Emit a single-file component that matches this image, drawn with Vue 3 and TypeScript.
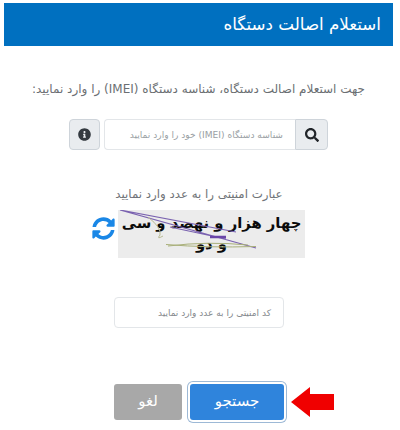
<script setup lang="ts">
const title: string = 'استعلام اصالت دستگاه'
</script>

<template>
  <div class="page" dir="rtl">
    <header class="head">{{ title }}</header>
    <p class="intro">جهت استعلام اصالت دستگاه، شناسه دستگاه (IMEI) را وارد نمایید:</p>
    <div class="imei">
      <div class="group">
        <button class="addon search" aria-label="search">
          <svg viewBox="0 0 512 512" width="14" height="14"><path fill="#212529" d="M505 442.700L405.300 343c-4.500-4.500-10.600-7-17-7H372c27.600-35.300 44-79.700 44-128C416 93.100 322.900 0 208 0S0 93.100 0 208s93.100 208 208 208c48.300 0 92.700-16.400 128-44v16.300c0 6.400 2.500 12.500 7 17l99.700 99.700c9.400 9.400 24.600 9.400 33.900 0l28.300-28.300c9.400-9.400 9.400-24.600.1-34zM208 336c-70.700 0-128-57.200-128-128 0-70.700 57.200-128 128-128 70.700 0 128 57.200 128 128 0 70.700-57.200 128-128 128z"/></svg>
        </button>
        <div class="field">شناسه دستگاه (IMEI) خود را وارد نمایید</div>
      </div>
      <button class="info" aria-label="info">
        <svg viewBox="0 0 512 512" width="13" height="13"><path fill="#343a40" d="M256 8C119 8 8 119.100 8 256c0 137 111 248 248 248s248-111 248-248C504 119.100 393 8 256 8zm0 110c23.200 0 42 18.800 42 42s-18.800 42-42 42-42-18.800-42-42 18.800-42 42-42zm56 254c0 6.600-5.400 12-12 12h-88c-6.600 0-12-5.400-12-12v-24c0-6.600 5.400-12 12-12h12v-64h-12c-6.600 0-12-5.400-12-12v-24c0-6.600 5.400-12 12-12h64c6.600 0 12 5.400 12 12v100h12c6.600 0 12 5.400 12 12v24z"/></svg>
      </button>
    </div>
    <p class="cap-label">عبارت امنیتی را به عدد وارد نمایید</p>
    <div class="captcha-row">
      <div class="captcha">
        <span class="cap-text">چهار هزار و نهصد و سی و دو</span>
        <svg class="noise" viewBox="0 0 187 48" width="187" height="48">
          <path d="M2 0L138 38M2 0L118 22M52 17L108 29" fill="none" stroke="#7a62b0" stroke-width="1.200"/>
          <path d="M48 34.500Q90 38 138 36.500M50 36Q90 31 130 35" fill="none" stroke="#a9b07a" stroke-width="1"/>
          <path d="M30 7Q44 18 42 25Q38 30 45 26" fill="none" stroke="#b9bb94" stroke-width="1"/>
          <path d="M92 27H108" stroke="#6a45a8" stroke-width="2.500"/>
        </svg>
      </div>
      <svg class="refresh" viewBox="0 0 512 512" width="23" height="23"><path fill="#1a87e6" d="M370.720 133.280C339.458 104.008 298.888 87.962 255.848 88c-77.458.068-144.328 53.178-162.791 126.850-1.344 5.363-6.122 9.150-11.651 9.150H24.103c-7.498 0-13.194-6.807-11.807-14.176C33.933 94.924 134.813 8 256 8c66.448 0 126.791 26.136 171.315 68.685L463.030 40.970C478.149 25.851 504 36.559 504 57.941V192c0 13.255-10.745 24-24 24H345.941c-21.382 0-32.090-25.851-16.971-40.971l41.750-41.749zM32 296h134.059c21.382 0 32.090 25.851 16.971 40.971l-41.750 41.750c31.262 29.273 71.835 45.319 114.876 45.280 77.418-.070 144.315-53.144 162.787-126.849 1.344-5.363 6.122-9.150 11.651-9.150h57.304c7.498 0 13.194 6.807 11.807 14.176C478.067 417.076 377.187 504 256 504c-66.448 0-126.791-26.136-171.315-68.685L48.970 471.030C33.851 486.149 8 475.441 8 454.059V320c0-13.255 10.745-24 24-24z"/></svg>
    </div>
    <div class="code">کد امنیتی را به عدد وارد نمایید</div>
    <div class="actions">
      <button class="btn primary">جستجو</button>
      <button class="btn muted">لغو</button>
      <svg class="arrow" viewBox="0 0 43 30" width="43" height="30"><path fill="#f00000" d="M0 15L19 0V7H43V23H19V30Z"/></svg>
    </div>
  </div>
</template>

<style>
html, body { margin: 0; background: #fff; }
</style>

<style scoped>
.page {
  width: 400px;
  height: 430px;
  overflow: hidden;
  box-sizing: border-box;
  padding-top: 3px;
  font-family: "DejaVu Sans", sans-serif;
  color: #6c757d;
  background: #fff;
}
.head {
  margin: 0 7px 0 4px;
  height: 43px;
  box-sizing: border-box;
  padding: 0 12px 2px;
  display: flex;
  align-items: center;
  background: #0070c0;
  color: #fff;
  font-size: 16.700px;
}
.intro {
  margin: 33px 35px 0 0;
  font-size: 12px;
  line-height: 20px;
  color: #6b6f73;
  white-space: nowrap;
}
.imei {
  margin: 20px 72px 0 0;
  display: flex;
  gap: 4px;
}
.group { display: flex; }
.addon, .info {
  padding: 0;
  display: flex;
  align-items: center;
  justify-content: center;
  height: 31px;
  background: #e9ecef;
  border: 1px solid #ced4da;
}
.search {
  width: 33px;
  border-radius: 0 4px 4px 0;
}
.info {
  width: 31px;
  border-radius: 4px;
}
.field {
  width: 191px;
  height: 31px;
  box-sizing: border-box;
  border: 1px solid #e3e6e9;
  border-right: 0;
  border-radius: 4px 0 0 4px;
  padding: 0 12px;
  display: flex;
  align-items: center;
  font-size: 9.100px;
  color: #9a9fa4;
  white-space: nowrap;
}
.cap-label {
  margin: 35px 0 0;
  padding-left: 0;
  padding-right: 2px;
  text-align: center;
  font-size: 11.800px;
  line-height: 18px;
  color: #707478;
}
.captcha-row {
  margin: 7px 95px 0 0;
  display: flex;
  gap: 3px;
  align-items: flex-start;
}
.captcha {
  position: relative;
  width: 187px;
  height: 48px;
  flex: none;
  background: #ececec;
  color: #0b0b0b;
  font-size: 14.800px;
  font-weight: 700;
  line-height: 21px;
  text-align: center;
  padding-top: 2px;
  box-sizing: border-box;
}
.cap-text { display: block; }
.noise { position: absolute; left: 0; top: 0; }
.refresh { margin-top: 7px; flex: none; }
.code {
  margin: 39px 116px 0 0;
  width: 170px;
  height: 31px;
  box-sizing: border-box;
  border: 1px solid #e3e6e9;
  border-radius: 4px;
  padding: 0 12px;
  display: flex;
  align-items: center;
  font-size: 9px;
  color: #85898d;
  white-space: nowrap;
}
.actions {
  position: relative;
  margin-top: 56px;
  display: flex;
  gap: 8px;
  padding-right: 116px;
}
.btn {
  border: 0;
  height: 36px;
  border-radius: 3px;
  color: #fff;
  font-family: inherit;
  font-size: 15px;
  padding: 0 0 3px;
}
.primary {
  width: 94px;
  background: #2f84dc;
  box-shadow: 0 0 0 2px #fff, 0 0 0 3px #9db9d6;
}
.muted {
  width: 68px;
  background: #a8a8a8;
}
.arrow { position: absolute; left: 291px; top: 3px; }
</style>
